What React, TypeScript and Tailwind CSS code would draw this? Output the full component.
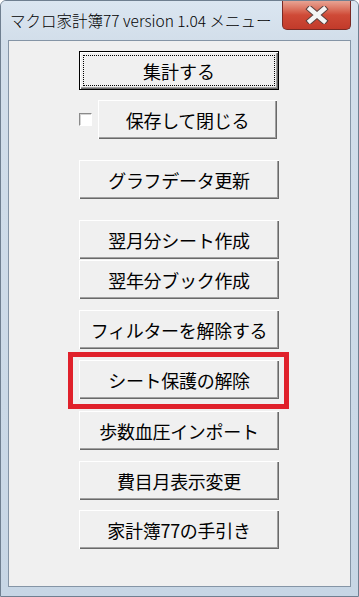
import React from "react";

const labels = {
  sum: "集計する",
  save: "保存して閉じる",
};

function Btn({ label, wide = true, isDefault = false }: { label: string; wide?: boolean; isDefault?: boolean }) {
  if (isDefault) {
    return (
      <div className="h-[39px] w-[200px] border border-black bg-[#f0f0f0] shadow-[inset_1px_1px_0_#fff,inset_-1px_-1px_0_#696969,inset_-2px_-2px_0_#a0a0a0]">
        <div className="m-[3px] flex h-[31px] items-center justify-center border border-dotted border-black text-[18px] leading-none text-black">
          {label}
        </div>
      </div>
    );
  }
  return (
    <div
      className={
        (wide ? "w-[200px] " : "w-[179px] ") +
        "flex h-[39px] items-center justify-center bg-[#f0f0f0] text-[18px] leading-none tracking-[-0.3px] text-black shadow-[inset_1px_1px_0_#fff,inset_-1px_-1px_0_#696969,inset_-2px_-2px_0_#a0a0a0]"
      }
    >
      {label}
    </div>
  );
}

export default function App() {
  return (
    <div
      className="flex h-[597px] w-[359px] flex-col overflow-hidden rounded-t-[6px] border border-[#6f7f90] bg-gradient-to-b from-[#d3dfeb] to-[#c7d6e5]"
      style={{ fontFamily: '"Noto Sans CJK JP", "Noto Sans", sans-serif' }}
    >
      {/* title bar */}
      <div className="flex h-[39px] shrink-0 items-start justify-between bg-gradient-to-b from-[#dbe6f1] to-[#d2deea]">
        <div className="pl-[9px] pt-[10px] text-[15.5px] font-light leading-[18px] text-black">
          マクロ家計簿77 version 1.04 メニュー
        </div>
        <div className="mr-[7px] flex h-[29px] w-[69px] items-center justify-center rounded-b-[5px] border border-t-0 border-[#7a2a24] bg-gradient-to-b from-[#e7a393] via-[#cf4a37] to-[#c23a2a]">
          <svg width="24" height="18" viewBox="0 0 24 18">
            <path d="M5 3 L19 15 M19 3 L5 15" stroke="#5a4240" strokeWidth="6.5" strokeLinecap="square" />
            <path d="M5 3 L19 15 M19 3 L5 15" stroke="#f4f4f4" strokeWidth="4.5" strokeLinecap="square" />
          </svg>
        </div>
      </div>

      {/* client area */}
      <div className="mx-[7px] flex h-[547px] shrink-0 flex-col border border-[#8595a6] bg-[#f0f0f0] pl-[70px]">
        <div className="mt-[10px]">
          <Btn label={labels.sum} isDefault />
        </div>
        <div className="mt-[10px] flex items-center">
          <div className="h-[13px] w-[13px] border border-[#8a8a8a] border-b-white border-r-white bg-white shadow-[inset_1px_1px_0_#d4d4d4]" />
          <div className="ml-[6px]">
            <Btn label={labels.save} wide={false} />
          </div>
        </div>
        <div className="mt-[21px]">
          <Btn label="グラフデータ更新" />
        </div>
        <div className="mt-[21px]">
          <Btn label="翌月分シート作成" />
        </div>
        <div className="mt-[1px]">
          <Btn label="翌年分ブック作成" />
        </div>
        <div className="mt-[11px]">
          <Btn label="フィルターを解除する" />
        </div>
        <div className="relative mt-[11px]">
          <Btn label="シート保護の解除" />
          <div className="pointer-events-none absolute left-[-11px] top-[-8px] h-[57px] w-[221px] border-[5px] border-[#e0212b]" />
        </div>
        <div className="mt-[12px]">
          <Btn label="歩数血圧インポート" />
        </div>
        <div className="mt-[11px]">
          <Btn label="費目月表示変更" />
        </div>
        <div className="mt-[10px]">
          <Btn label="家計簿77の手引き" />
        </div>
      </div>
    </div>
  );
}
